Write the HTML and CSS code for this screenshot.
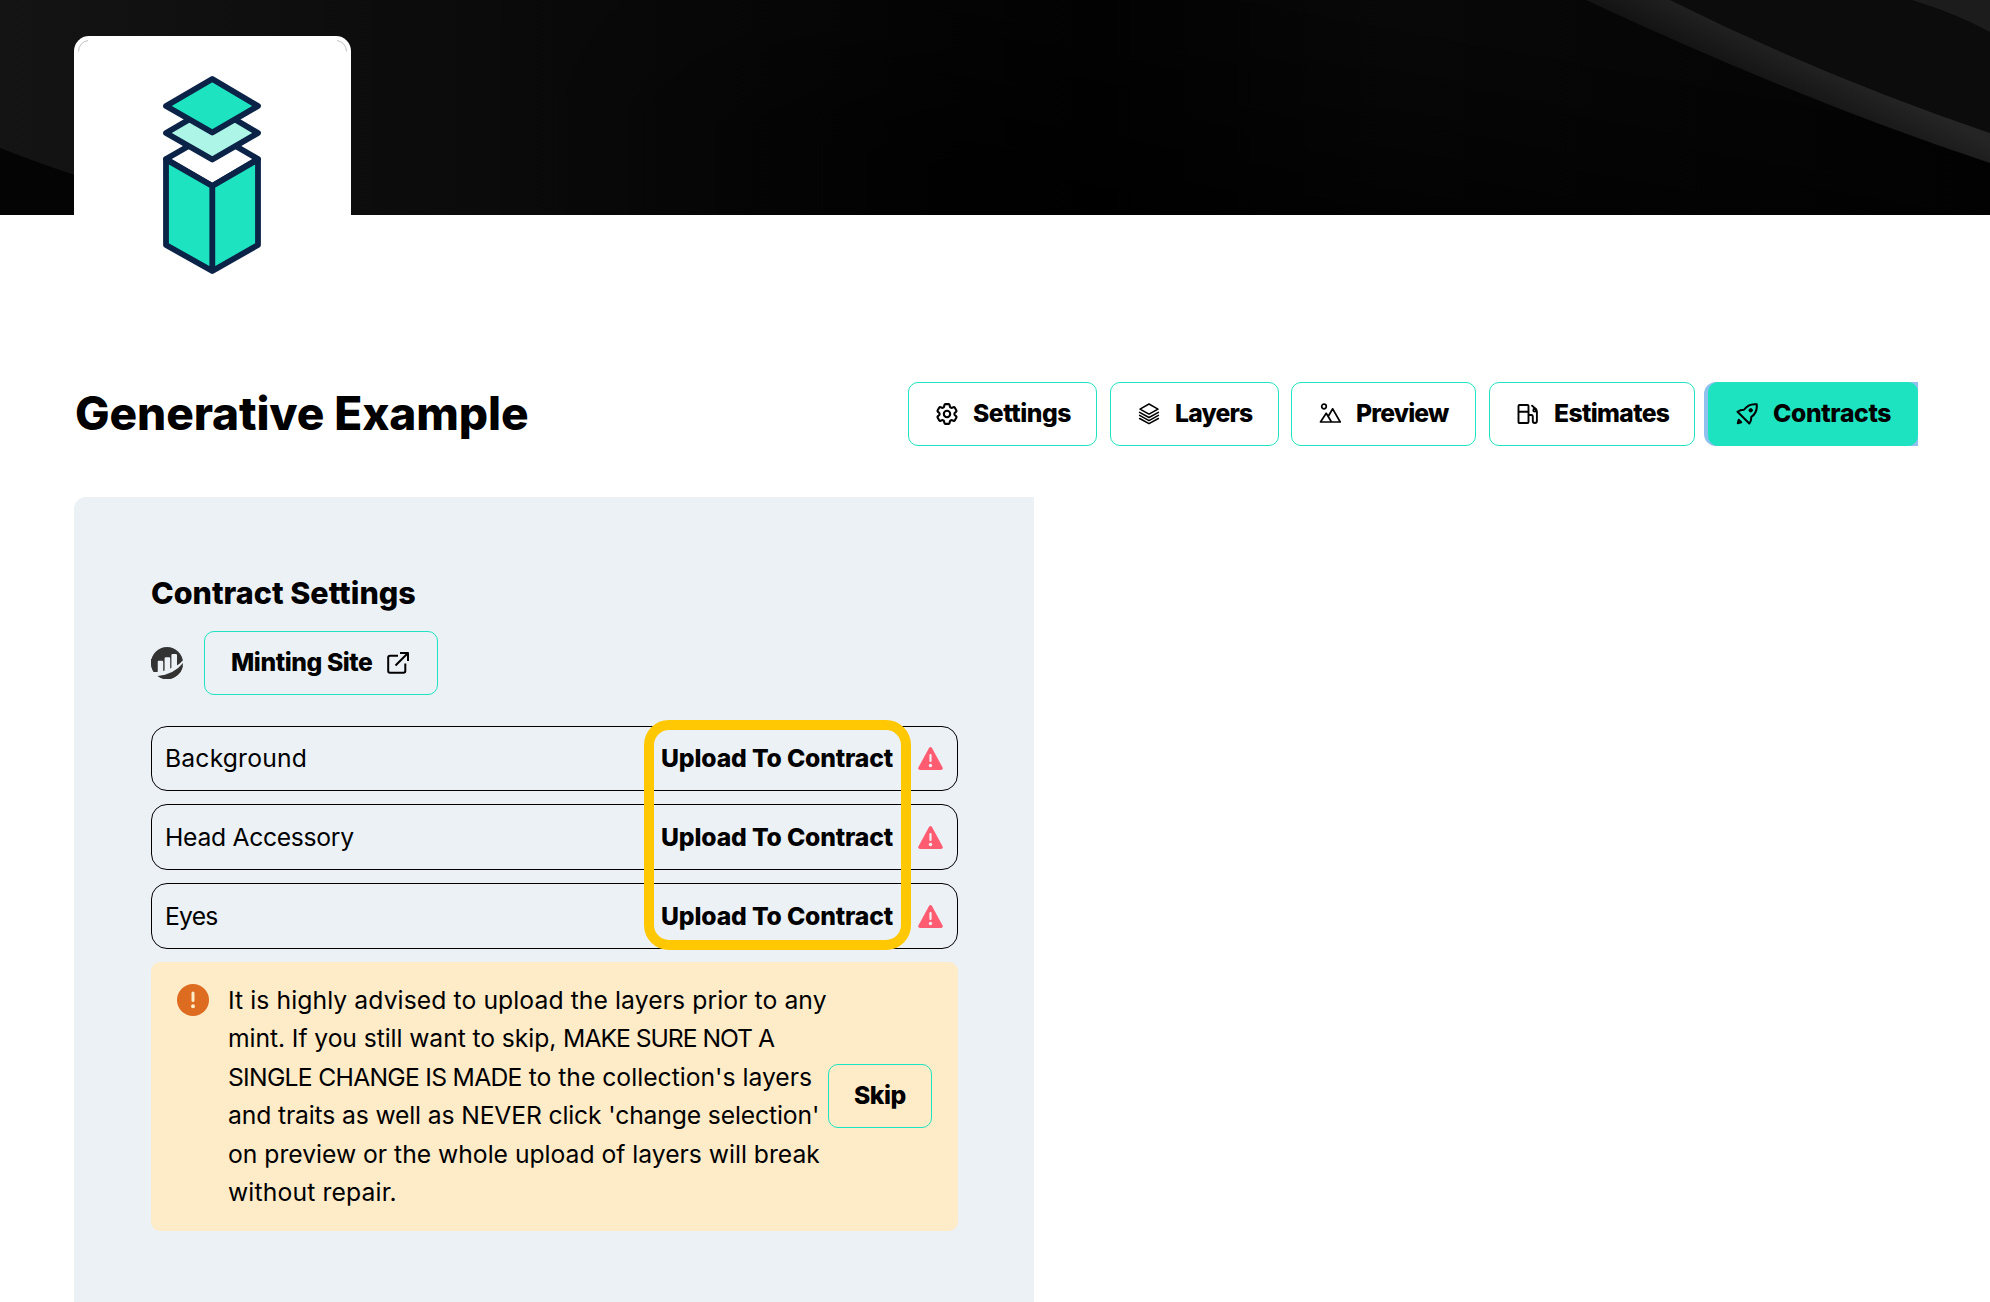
FILE: index.html
```html
<!DOCTYPE html>
<html lang="en">
<head>
<meta charset="utf-8">
<title>Generative Example</title>
<link rel="stylesheet" href="styles.css">
</head>
<body>
<header class="banner">
  <svg class="banner-art" viewBox="0 0 1990 215" preserveAspectRatio="none" aria-hidden="true">
    <defs>
      <linearGradient id="base" x1="0" x2="1" y1="0" y2="0">
        <stop offset="0" stop-color="#141414"/><stop offset=".2" stop-color="#0c0c0c"/><stop offset=".4" stop-color="#080808"/><stop offset=".55" stop-color="#030303"/><stop offset=".7" stop-color="#080808"/><stop offset="1" stop-color="#030303"/>
      </linearGradient>
      <linearGradient id="fall" gradientUnits="userSpaceOnUse" x1="1240" y1="0" x2="1200" y2="215">
        <stop offset="0" stop-color="#000" stop-opacity="0"/><stop offset="1" stop-color="#000" stop-opacity=".7"/>
      </linearGradient>
      <linearGradient id="reach" x1="0" x2="1" y1="0" y2="0">
        <stop offset="0" stop-color="#000"/><stop offset=".3" stop-color="#fff"/>
      </linearGradient>
      <mask id="right"><rect x="500" width="1490" height="215" fill="url(#reach)"/></mask>
      <linearGradient id="fold" gradientUnits="userSpaceOnUse" x1="1780" y1="95" x2="1802" y2="50">
        <stop offset="0" stop-color="#131313"/><stop offset="1" stop-color="#252525"/>
      </linearGradient>
    </defs>
    <rect width="1990" height="215" fill="url(#base)"/>
    <rect x="500" width="1490" height="215" fill="url(#fall)" mask="url(#right)"/>
    <path d="M0 148 Q40 164 90 180 V215 H0Z" fill="#040404"/>
    <path d="M1670 0 Q1820 75 1990 133 V0Z" fill="#0c0c0c"/>
    <path d="M1586 0 H1670 Q1820 75 1990 133 V163 Q1800 100 1586 0Z" fill="url(#fold)"/>
    <path d="M1912 0 Q1955 13 1990 32 V0Z" fill="#1c1c1c"/>
  </svg>
</header>
<main class="page">
  <div class="avatar">
    <svg class="logo" width="100" height="202" viewBox="162 74 100 202" fill="none" stroke="#0b2347" stroke-width="5.8" stroke-linejoin="round">
      <path d="M212.3 132.500 L258 159 212.300 186 166 159Z" fill="#fff"/>
      <path d="M166 159.500 L212.300 186 258 159.500 V245 L212.300 271 166 245Z M212.300 186 V271" fill="#1de3c0"/>
      <path d="M212.300 106 L258 133 212.300 159.500 166 133Z" fill="#adf5e7"/>
      <path d="M212.300 79 L258 106 212.300 132.500 166 106Z" fill="#1de3c0"/>
    </svg>
    <svg class="corners" width="269" height="12" viewBox="0 0 269 12" fill="none" stroke="#999" stroke-width=".6"><path d="M.5 11.500 A11 11 0 0 1 10 .5 M259 .5 A11 11 0 0 1 268.500 11.500"/></svg>
  </div>
  <div class="title-row">
    <h1 class="title">Generative Example</h1>
    <nav class="tabs">
      <a class="btn tab tab-settings"><svg class="icon" viewBox="2 2 20 20" fill="none" stroke="currentColor" stroke-width="1.900" stroke-linejoin="round"><path d="M9.594 3.940c.09-.542.56-.94 1.110-.94h2.593c.55 0 1.020.398 1.110.94l.213 1.281c.063.374.313.686.645.87.074.04.147.083.22.127.325.196.72.257 1.075.124l1.217-.456a1.125 1.125 0 0 1 1.370.49l1.296 2.247a1.125 1.125 0 0 1-.26 1.431l-1.003.827c-.293.241-.438.613-.43.992a7.723 7.723 0 0 1 0 .255c-.008.378.137.75.43.991l1.004.827c.424.35.534.955.26 1.430l-1.298 2.247a1.125 1.125 0 0 1-1.369.491l-1.217-.456c-.355-.133-.75-.072-1.076.124a6.470 6.470 0 0 1-.22.128c-.331.183-.581.495-.644.869l-.213 1.281c-.09.543-.56.94-1.110.94h-2.594c-.55 0-1.019-.398-1.110-.94l-.213-1.281c-.062-.374-.312-.686-.644-.87a6.520 6.520 0 0 1-.22-.127c-.325-.196-.72-.257-1.076-.124l-1.217.456a1.125 1.125 0 0 1-1.369-.49l-1.297-2.247a1.125 1.125 0 0 1 .26-1.431l1.004-.827c.292-.24.437-.613.43-.991a6.932 6.932 0 0 1 0-.255c.007-.38-.138-.751-.43-.992l-1.004-.827a1.125 1.125 0 0 1-.26-1.430l1.297-2.247a1.125 1.125 0 0 1 1.370-.491l1.216.456c.356.133.751.072 1.076-.124.072-.044.146-.086.22-.128.332-.183.582-.495.644-.869l.214-1.280Z"/><circle cx="12" cy="12" r="2.900"/></svg><span>Settings</span></a>
      <a class="btn tab tab-layers"><svg class="icon" viewBox="0 0 22 22" fill="none" stroke="currentColor" stroke-width="1.500" stroke-linejoin="round" stroke-linecap="round"><path d="M11 1 L20 6.100 11 11.200 2 6.100Z M1.600 9.300 L11 14.500 20.400 9.300 M1.600 12.400 L11 17.600 20.400 12.400 M1.600 15.500 L11 20.700 20.400 15.500"/></svg><span>Layers</span></a>
      <a class="btn tab tab-preview"><svg class="icon" viewBox="0 0 22 22" fill="none" stroke="currentColor" stroke-width="1.700" stroke-linejoin="round"><circle cx="5" cy="3.500" r="2.300"/><path d="M1.500 19 L7.200 10.300 12.500 19Z M9.300 13.200 L13.700 5.800 21.200 19 H12"/></svg><span>Preview</span></a>
      <a class="btn tab tab-estimates"><svg class="icon" viewBox="0 0 22 22" fill="none" stroke="currentColor" stroke-width="1.900" stroke-linejoin="round" stroke-linecap="round"><path d="M2.500 2 H10.500 Q11.500 2 11.500 3 V19 Q11.500 20 10.500 20 H2.500 Q1.500 20 1.500 19 V3 Q1.500 2 2.500 2Z M1.500 8.700 H11.500 M15.100 2.700 L18.500 5.600 Q19.900 6.800 19.900 8.500 V18 Q19.900 20 17.800 20 Q15.800 20 15.800 18 V13.500 Q15.800 12 14.300 12 H12"/><circle cx="17.700" cy="7.200" r="1.400"/></svg><span>Estimates</span></a>
      <a class="btn tab tab-contracts"><svg class="icon" viewBox="0 0 22 22" fill="none" stroke="currentColor" stroke-width="2" stroke-linejoin="round" stroke-linecap="round"><path d="M20.700 1.300 C15.500 .7 11.500 1.800 8 6.800 Q4.500 6.700 1.500 8.800 L13.300 20.500 Q15.500 17.800 15.200 14 C20.300 10.500 21.300 6.500 20.700 1.300Z"/><path d="M1.800 20.200 L2.700 16.800 5.200 19.200Z" fill="currentColor"/><circle cx="14.700" cy="7.300" r="1.700" fill="currentColor" stroke-width="1"/></svg><span>Contracts</span></a>
    </nav>
  </div>
  <section class="panel">
    <h2 class="heading">Contract Settings</h2>
    <div class="site-row">
      <svg class="scan" width="32" height="32" viewBox="0 0 32 32"><circle cx="16" cy="16" r="16" fill="#333"/><path d="M-1 25 H6.500 V15 Q6.500 13.800 7.700 13.800 H11 Q12.200 13.800 12.200 15 V24 L13.600 23.500 V11.500 Q13.600 10.200 14.800 10.200 H18 Q19.200 10.200 19.200 11.500 V21.500 L20.400 21 V8.300 Q20.400 7 21.600 7 H24.800 Q26 7 26 8.300 V18.500 Q29.500 16.500 31.500 13.500 L33 17 Q24 28 6.500 29.500 L3 27Z" fill="#ecf1f6"/><path d="M0 16 Q0 20.500 2 24 Q2.600 25.200 4 25 L6.500 24.500 V12 H0Z M6.500 29 Q23 27.500 32 16 A16 16 0 0 1 6.500 29Z" fill="#333"/></svg>
      <a class="btn mint"><span>Minting Site</span><svg class="icon" viewBox="0 0 22 22" fill="none" stroke="currentColor" stroke-width="2" stroke-linejoin="round"><path d="M11 3.700 H3 Q1.200 3.700 1.200 5.500 V19 Q1.200 20.800 3 20.800 H16.500 Q18.300 20.800 18.300 19 V11.500 M13 1 H21 V9 M21 1 L8.500 13.500"/></svg></a>
    </div>
    <div class="layers">
      <div class="layer first"><span class="name background">Background</span><b class="upload">Upload To Contract</b><svg class="warn" viewBox="0 0 25 23"><path d="M11 1 Q12.500 -.8 14 1 L24.600 20.500 Q25.300 22.700 23 23 H2 Q-.3 22.700 .4 20.500Z" fill="#ff5c72"/><path d="M12.500 8 V14" stroke="#ecf1f6" stroke-width="2.200" stroke-linecap="round"/><circle cx="12.500" cy="18.500" r="1.700" fill="#ecf1f6"/></svg></div>
      <div class="layer"><span class="name head">Head Accessory</span><b class="upload">Upload To Contract</b><svg class="warn" viewBox="0 0 25 23"><path d="M11 1 Q12.500 -.8 14 1 L24.600 20.500 Q25.300 22.700 23 23 H2 Q-.3 22.700 .4 20.500Z" fill="#ff5c72"/><path d="M12.500 8 V14" stroke="#ecf1f6" stroke-width="2.200" stroke-linecap="round"/><circle cx="12.500" cy="18.500" r="1.700" fill="#ecf1f6"/></svg></div>
      <div class="layer"><span class="name eyes">Eyes</span><b class="upload">Upload To Contract</b><svg class="warn" viewBox="0 0 25 23"><path d="M11 1 Q12.500 -.8 14 1 L24.600 20.500 Q25.300 22.700 23 23 H2 Q-.3 22.700 .4 20.500Z" fill="#ff5c72"/><path d="M12.500 8 V14" stroke="#ecf1f6" stroke-width="2.200" stroke-linecap="round"/><circle cx="12.500" cy="18.500" r="1.700" fill="#ecf1f6"/></svg></div>
      <div class="highlight"></div>
    </div>
    <div class="alert">
      <svg class="alert-icon" width="32" height="32" viewBox="0 0 32 32"><circle cx="16" cy="16" r="16" fill="#dd6b20"/><path d="M16 9 V16.500" stroke="#feebc8" stroke-width="3" stroke-linecap="round"/><circle cx="16" cy="22.300" r="2" fill="#feebc8"/></svg>
      <p class="alert-text"><span class="l1">It is highly advised to upload the layers prior to any</span><br><span class="l2">mint. If you still want to skip, <span class="caps">MAKE SURE NOT A</span></span><br><span class="l3"><span class="caps">SINGLE CHANGE IS MADE</span> to the collection's layers</span><br><span class="l4">and traits as well as NEVER click 'change selection'</span><br><span class="l5">on preview or the whole upload of layers will break</span><br><span class="l6">without repair.</span></p>
      <a class="btn skip"><span>Skip</span></a>
    </div>
  </section>
</main>
</body>
</html>
```

FILE: styles.css
```css
* { box-sizing: border-box; }
body { margin: 0; background: #fff; color: #000; font: 24.7px/38.4px Inter, sans-serif; height: 1302px; overflow: hidden; }
svg { display: block; flex: none; }

.banner { height: 215px; background: #080808; }
.banner-art { width: 100%; height: 215px; }
.page { padding: 0 72px 0 74px; }
.avatar { position: relative; width: 277px; height: 277px; margin-top: -179px; padding: 38px 88px; border-radius: 15px; background: #fff; }
.corners { position: absolute; left: 4px; top: 4px; }

.title-row { display: flex; justify-content: space-between; align-items: center; height: 64px; margin-top: 69px; }
.title { margin: 0 0 2px 1px; font-size: 46px; line-height: 60px; font-weight: 800; letter-spacing: -.1px; white-space: nowrap; }
.tabs { display: flex; }
.btn { display: flex; align-items: center; height: 64px; border: 1px solid #1de3c0; border-radius: 10px; font-weight: 800; white-space: nowrap; padding-left: 27px; }
.btn span { padding-bottom: 1px; }
.icon { width: 22px; height: 22px; }
.tab { gap: 15px; margin-left: 13px; }
.tab-settings { width: 189px; margin-left: 0; letter-spacing: -.45px; }
.tab-layers { width: 169px; letter-spacing: -.8px; }
.tab-preview { width: 185px; margin-left: 12px; letter-spacing: -.8px; }
.tab-estimates { width: 206px; letter-spacing: -.65px; }
.tab-contracts { position: relative; width: 210px; background: #1de3c0; letter-spacing: -.35px; }
.tab-contracts::before { content: ""; position: absolute; z-index: -1; inset: -1px -1px -1px -5px; border-radius: 12px 0 0 12px; background: #90c0ee; }

.panel { width: 960px; height: 805px; margin-top: 51px; padding: 76px 76px 0 77px; border-radius: 12px 0 0 0; background: #ecf1f6; }
.heading { margin: 0; font-size: 30.5px; line-height: 40px; font-weight: 800; white-space: nowrap; }
.site-row { display: flex; align-items: center; gap: 21px; margin-top: 18px; }
.mint { width: 234px; padding-left: 26px; gap: 14px; letter-spacing: -.42px; }

.layers { position: relative; display: flex; flex-direction: column; gap: 13px; margin-top: 31px; }
.layer { display: flex; align-items: center; height: 66px; border: 1px solid #000; border-radius: 16px; padding-left: 13px; white-space: nowrap; }
.layer.first { height: 65px; }
.background { letter-spacing: .17px; }
.head { letter-spacing: -.3px; }
.eyes { letter-spacing: -.75px; }
.upload { margin-left: auto; font-weight: 800; letter-spacing: -.15px; }
.warn { width: 25px; height: 23px; margin: 0 14px 0 25px; }
.highlight { position: absolute; left: 493px; top: -6px; width: 267px; height: 230px; border: 10px solid #ffc803; border-radius: 25px; }

.alert { display: flex; height: 269px; margin-top: 13px; padding: 19px 26px; border-radius: 9px; background: #feebc8; }
.alert-icon { margin-top: 3px; }
.alert-text { width: 600px; margin: 0 0 0 19px; flex: none; white-space: nowrap; }
.l1 { letter-spacing: .09px; }
.l2 { letter-spacing: -.08px; }
.l3 { letter-spacing: 0; }
.l4 { letter-spacing: -.14px; }
.l5 { letter-spacing: -.01px; }
.l6 { letter-spacing: .15px; }
.l2 .caps { letter-spacing: -1.03px; }
.l3 .caps { letter-spacing: -.72px; }
.skip { align-self: center; width: 104px; padding-left: 25px; margin-top: -2px; letter-spacing: -.5px; }
```
